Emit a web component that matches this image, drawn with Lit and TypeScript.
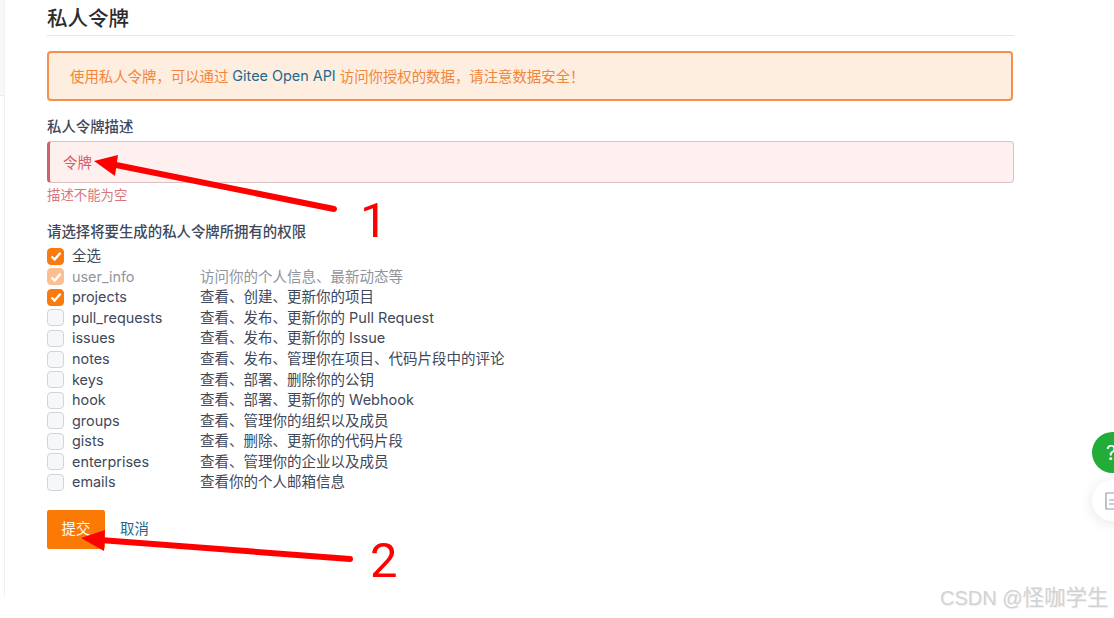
import { LitElement, css, html, svg } from 'lit';
import { customElement } from 'lit/decorators.js';
import { classMap } from 'lit/directives/class-map.js';

const scopes = [
  { name: '全选', desc: '', checked: true },
  { name: 'user_info', desc: '访问你的个人信息、最新动态等', checked: true, disabled: true },
  { name: 'projects', desc: '查看、创建、更新你的项目', checked: true },
  { name: 'pull_requests', desc: '查看、发布、更新你的 Pull Request' },
  { name: 'issues', desc: '查看、发布、更新你的 Issue' },
  { name: 'notes', desc: '查看、发布、管理你在项目、代码片段中的评论' },
  { name: 'keys', desc: '查看、部署、删除你的公钥' },
  { name: 'hook', desc: '查看、部署、更新你的 Webhook' },
  { name: 'groups', desc: '查看、管理你的组织以及成员' },
  { name: 'gists', desc: '查看、删除、更新你的代码片段' },
  { name: 'enterprises', desc: '查看、管理你的企业以及成员' },
  { name: 'emails', desc: '查看你的个人邮箱信息' },
];

@customElement('app-root')
export class AppRoot extends LitElement {
  static styles = css`
    :host {
      display: block;
      position: relative;
      width: 1114px;
      height: 618px;
      overflow: hidden;
      background: #fff;
      font-family: 'Inter', 'Noto Sans CJK SC', sans-serif;
      font-size: 14.4px;
      color: #40485b;
    }

    .shell {
      display: flex;
      height: 597px;
    }

    .sidebar {
      width: 4px;
      flex-shrink: 0;
      border-right: 1px solid #eef0f3;
      background: linear-gradient(#f7f8fa 0 95px, #e9ebef 95px 96px, #fff 96px);
    }

    .main {
      width: 967px;
      margin-left: 42px;
      display: flex;
      flex-direction: column;
    }

    .title {
      margin: 0;
      height: 35px;
      line-height: 37px;
      font-size: 20.5px;
      font-weight: 500;
      color: #2c2c2c;
      border-bottom: 1px solid #e5e6e8;
    }

    .alert {
      margin: 15px 1px 0 0;
      height: 50px;
      box-sizing: border-box;
      padding: 0 0 2px 21px;
      display: flex;
      align-items: center;
      white-space: pre;
      background: #feeee0;
      border: 2px solid #f68e4e;
      border-radius: 4px;
      color: #f2853c;
    }

    .alert a {
      color: #1f6a8c;
      text-decoration: none;
    }

    .label {
      margin-top: 15px;
      height: 21px;
      line-height: 21px;
      font-weight: 500;
    }

    .input {
      margin-top: 4px;
      height: 42px;
      box-sizing: border-box;
      padding: 0 0 2px 13px;
      display: flex;
      align-items: center;
      background: #fff0f0;
      border: 1px solid #e0bfc2;
      border-left: 3px solid #d0616a;
      border-radius: 4px;
      color: #d65c65;
    }

    .error {
      margin-top: 2px;
      height: 20px;
      line-height: 20px;
      font-size: 13.4px;
      color: #d9767d;
    }

    .scopes-title {
      margin-top: 16px;
    }

    .scopes {
      margin-top: 4px;
      display: grid;
      grid-template-columns: 25px 128px 1fr;
      grid-auto-rows: 20.55px;
      align-items: center;
      line-height: 20px;
    }

    .row {
      display: contents;
    }

    .row.disabled > * {
      color: #8f949e;
    }

    .desc {
      font-size: 14.5px;
    }

    .box {
      width: 17px;
      height: 17px;
      box-sizing: border-box;
      border: 1px solid #d2d4d8;
      border-radius: 4px;
      background: #f6f7f8;
      display: flex;
      align-items: center;
      justify-content: center;
    }

    .box.checked {
      background: #fb7a0d;
      border-color: #fb7a0d;
    }

    .row.disabled .box {
      background: #fdbf91;
      border-color: #fdbf91;
    }

    .box svg {
      width: 12px;
      height: 12px;
    }

    .actions {
      margin-top: 17px;
      display: flex;
      align-items: center;
      gap: 15px;
    }

    .submit {
      width: 58px;
      height: 39px;
      padding: 0 0 3px;
      border: 0;
      border-radius: 2px;
      background: #fb7a05;
      color: #fff;
      font: inherit;
    }

    .cancel {
      padding-bottom: 3px;
      color: #1f6a8c;
      text-decoration: none;
    }

    .fab {
      position: absolute;
      left: 1092px;
      width: 41px;
      height: 41px;
      border-radius: 50%;
      display: flex;
      align-items: center;
      padding-left: 14px;
      box-sizing: border-box;
      font-size: 20px;
    }

    .fab.help {
      top: 432px;
      background: #22ac38;
      color: #fff;
    }

    .fab.doc {
      top: 480px;
      background: #fff;
      box-shadow: 0 2px 14px rgba(0, 0, 0, 0.1);
    }

    .fab.doc svg {
      width: 16px;
      height: 18px;
      margin-left: -1px;
    }

    .marks {
      position: absolute;
      inset: 0;
      width: 1114px;
      height: 618px;
      pointer-events: none;
    }

    .marks text {
      font-family: 'Roboto', sans-serif;
      font-size: 49px;
      fill: #f00;
    }

    .watermark {
      position: absolute;
      left: 940px;
      top: 582px;
      font-family: 'Liberation Sans', sans-serif;
      font-size: 20px;
      line-height: 28px;
      white-space: nowrap;
      color: #d2d2d2;
      text-shadow: 1px 1px 1px #eee;
    }

    .watermark span {
      font-family: 'Noto Sans CJK SC', sans-serif;
      font-size: 21.5px;
    }
  `;

  private renderScope(s: (typeof scopes)[number]) {
    return html`
      <div class=${classMap({ row: true, disabled: !!s.disabled })}>
        <span class=${classMap({ box: true, checked: !!s.checked })}>
          ${s.checked
            ? html`<svg viewBox="0 0 12 12" fill="none" stroke="#fff" stroke-width="2.4">
                <path d="M1.5 6.5 4.6 9.5 10.5 2.8" />
              </svg>`
            : ''}
        </span>
        <span>${s.name}</span>
        <span class="desc">${s.desc}</span>
      </div>
    `;
  }

  render() {
    return html`
      <div class="shell">
        <div class="sidebar"></div>
        <div class="main">
          <h2 class="title">私人令牌</h2>
          <div class="alert">使用私人令牌，可以通过 <a href="#">Gitee Open API</a> 访问你授权的数据，请注意数据安全！</div>
          <div class="label">私人令牌描述</div>
          <div class="input">令牌</div>
          <div class="error">描述不能为空</div>
          <div class="label scopes-title">请选择将要生成的私人令牌所拥有的权限</div>
          <div class="scopes">${scopes.map((s) => this.renderScope(s))}</div>
          <div class="actions">
            <button class="submit">提交</button>
            <a class="cancel" href="#">取消</a>
          </div>
        </div>
      </div>

      <div class="fab help">?</div>
      <div class="fab doc">
        <svg viewBox="0 0 16 18" fill="none" stroke="#9a9aa8" stroke-width="1.2">
          <path d="M1 1h14v16H1z M4 8h6 M4 12h6" />
        </svg>
      </div>

      <svg class="marks" viewBox="0 0 1114 618">
        ${svg`
          <path d="M334 209 116 165" stroke="#f00" stroke-width="6" stroke-linecap="round" fill="none" />
          <path d="M94 161 118 155 115 176z" fill="#f00" />
          <path d="M350 559 100 540" stroke="#f00" stroke-width="6" stroke-linecap="round" fill="none" />
          <path d="M81 538 105 530 104 551z" fill="#f00" />
          <text x="360" y="237">1</text>
          <text x="370" y="577">2</text>
        `}
      </svg>

      <div class="watermark">CSDN @<span>怪咖学生</span></div>
    `;
  }
}

declare global {
  interface HTMLElementTagNameMap {
    'app-root': AppRoot;
  }
}
